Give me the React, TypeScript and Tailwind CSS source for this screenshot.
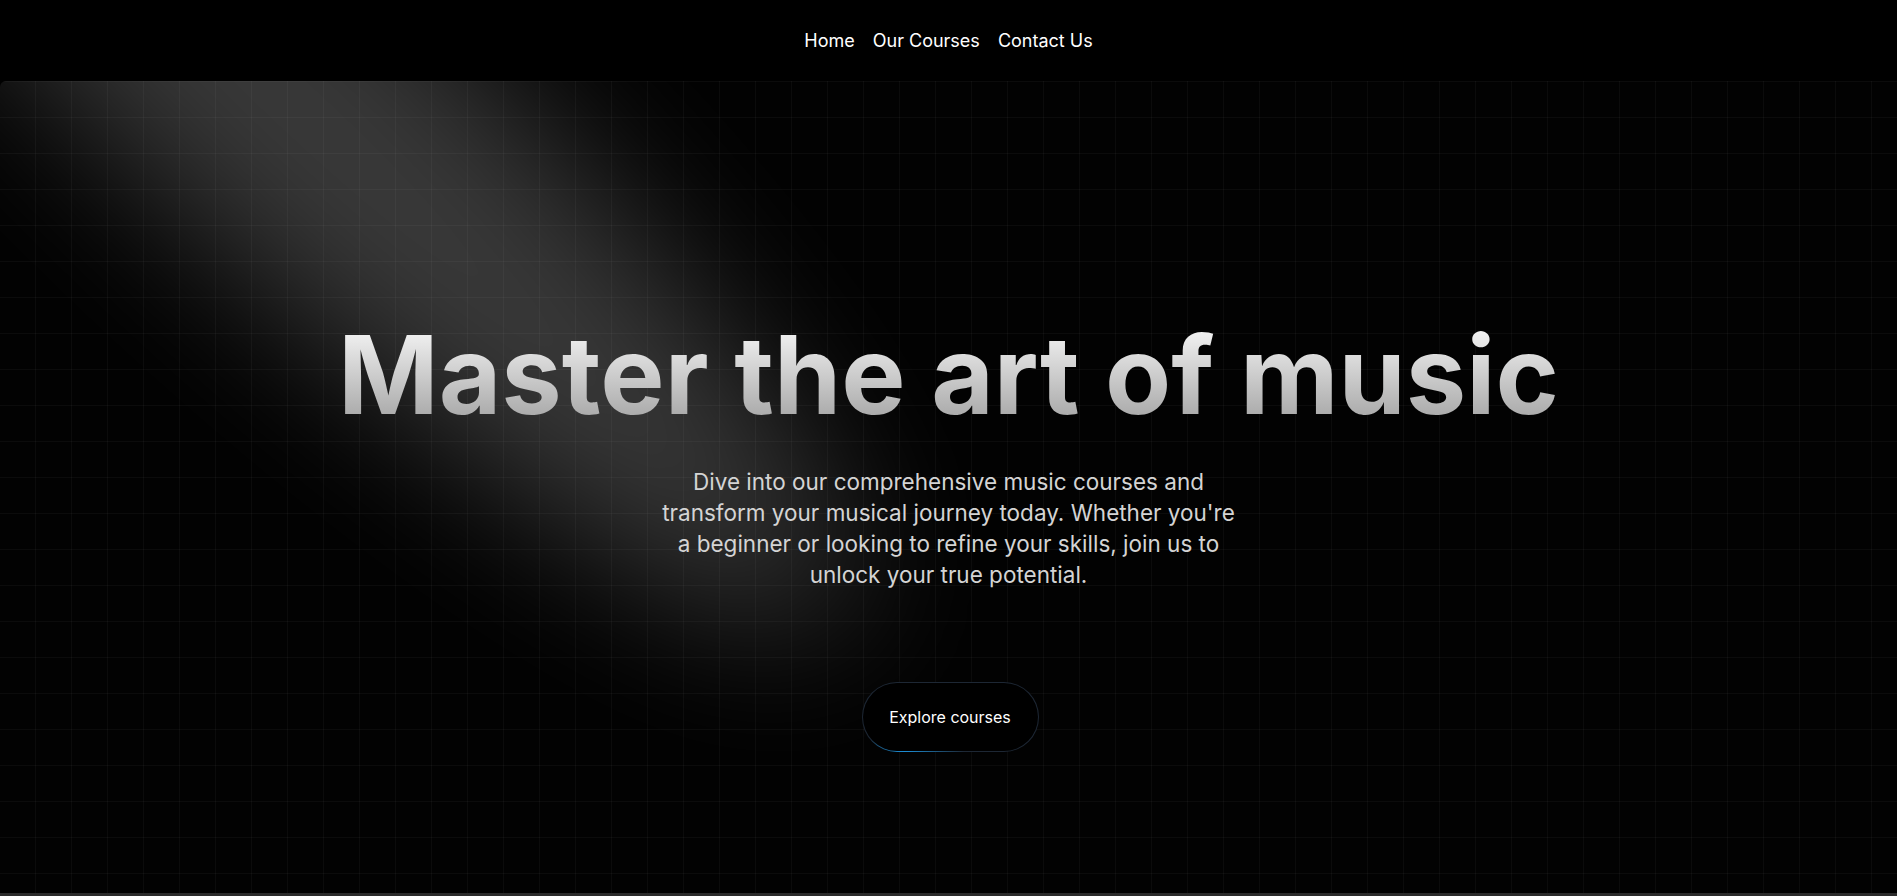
import React from "react";

const Spotlight: React.FC = () => {
  return (
    <svg
      className="pointer-events-none absolute inset-0 h-full w-full"
      fill="none"
    >
      <defs>
        <filter
          id="spot-blur"
          x="-1500"
          y="-1500"
          width="5000"
          height="4000"
          filterUnits="userSpaceOnUse"
          colorInterpolationFilters="sRGB"
        >
          <feGaussianBlur stdDeviation="78" />
        </filter>
      </defs>
      <g filter="url(#spot-blur)">
        <ellipse
          cx="305"
          cy="34"
          rx="735"
          ry="155"
          transform="rotate(43 305 34)"
          fill="white"
          fillOpacity="0.22"
        />
      </g>
    </svg>
  );
};

const App: React.FC = () => {
  return (
    <div className="min-h-screen bg-black font-['Inter','Noto_Sans',sans-serif] text-white">
      {/* Nav */}
      <nav className="flex h-[81px] items-center justify-center gap-[18px] text-[18px]">
        <a href="#" className="text-white">Home</a>
        <a href="#" className="text-white">Our Courses</a>
        <a href="#" className="text-white">Contact Us</a>
      </nav>

      {/* Hero */}
      <section className="relative h-[812px] w-full overflow-hidden rounded-tl-md bg-[#020202]">
        <Spotlight />
        <div className="pointer-events-none absolute inset-0 bg-[linear-gradient(to_right,rgba(255,255,255,0.035)_1px,transparent_1px),linear-gradient(to_bottom,rgba(255,255,255,0.035)_1px,transparent_1px)] bg-size-[36px_36px] bg-position-[-1px_0px]" />

        <div className="relative z-10 flex flex-col items-center pt-[240px]">
          <h1 className="bg-gradient-to-b from-neutral-50 to-neutral-400 bg-clip-text text-center text-[108px] font-bold leading-none text-transparent">
            Master the art of music
          </h1>
          <p className="mt-[37px] max-w-[582px] text-center text-[22.5px] leading-[31px] text-neutral-300">
            Dive into our comprehensive music courses and transform your musical
            journey today. Whether you're a beginner or looking to refine your
            skills, join us to unlock your true potential.
          </p>

          <a
            href="#"
            className="ml-[3px] mt-[92px] rounded-full bg-[radial-gradient(60px_16px_at_24%_100%,#1c8fd8_0%,transparent_100%),linear-gradient(#1d2734,#1d2734)] p-px"
          >
            <span className="flex h-[68px] w-[175px] items-center justify-center rounded-full bg-black text-base text-white">
              Explore courses
            </span>
          </a>
        </div>
      </section>
      <div className="h-10 bg-[#2b2b2b]" />
    </div>
  );
};

export default App;
